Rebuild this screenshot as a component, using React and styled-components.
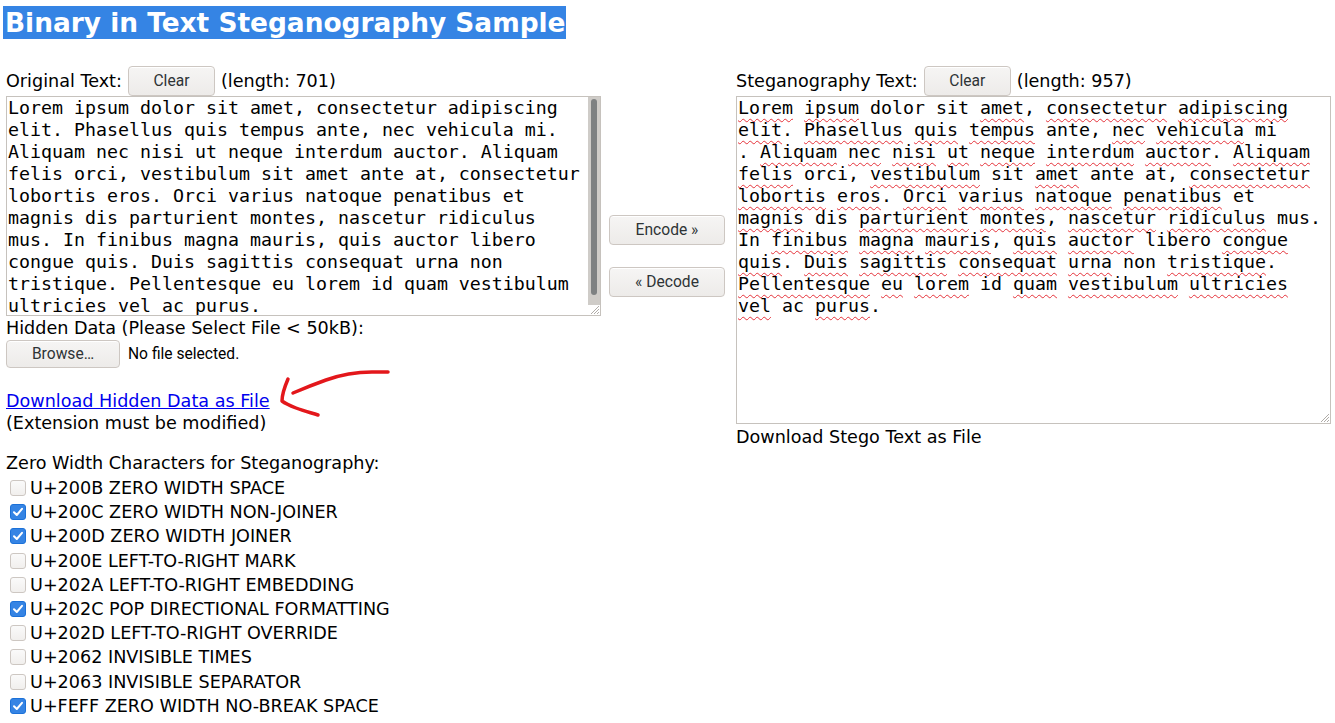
import React from 'react';
import styled, { createGlobalStyle } from 'styled-components';

const GlobalStyle = createGlobalStyle`
  body {
    margin: 0;
    background: #ffffff;
    color: #000000;
    font-family: 'DejaVu Sans', 'Noto Sans', sans-serif;
    font-size: 17.6px;
  }
`;

const Page = styled('div')`
  padding: 6px 0 0 0;
  width: 1335px;
  height: 723px;
  overflow: hidden;
  box-sizing: border-box;
`;

const Heading = styled('h2')`
  margin: 0 0 0 3px;
  font-size: 26.4px;
  font-weight: bold;
  line-height: 33px;
  height: 33px;
`;

const Selected = styled('span')`
  display: inline-block;
  background: #3584e4;
  color: #ffffff;
  padding: 0 1px 0 2px;
`;

const Columns = styled('div')`
  display: flex;
  align-items: flex-start;
  margin-top: 26px;
  padding-left: 6px;
`;

const Column = styled('div')`
  display: flex;
  flex-direction: column;
  width: ${(p) => p.$width}px;
`;

const Middle = styled('div')`
  display: flex;
  flex-direction: column;
  gap: 22px;
  width: 116px;
  margin: 0 11px 0 8px;
  padding-top: 150px;
`;

const LabelRow = styled('div')`
  display: flex;
  align-items: center;
  height: 31px;
  white-space: nowrap;
`;

const Button = styled('button')`
  font-family: Roboto, 'Noto Sans', sans-serif;
  font-size: 15.6px;
  color: #2e3436;
  height: ${(p) => p.$height || 30}px;
  width: ${(p) => p.$width}px;
  margin: ${(p) => p.$margin || '0'};
  padding: 0;
  border: 1px solid #cdc7c2;
  border-radius: 4px;
  background: linear-gradient(#f6f5f4, #edebe9);
  box-shadow: inset 0 1px 0 #ffffff;
  cursor: pointer;
`;

const TextBox = styled('div')`
  position: relative;
  display: flex;
  height: ${(p) => p.$height}px;
  box-sizing: border-box;
  border: 1px solid #c6c2bd;
  background: #ffffff;
  overflow: hidden;
`;

const MonoText = styled('div')`
  flex: 1;
  padding: 0 2px 0 1px;
  font-family: 'DejaVu Sans Mono', 'Liberation Mono', monospace;
  font-size: 18.27px;
  line-height: 22px;
  white-space: pre-wrap;
  color: #000000;
`;

const ScrollTrack = styled('div')`
  display: flex;
  justify-content: center;
  width: 12px;
  height: 208px;
  padding-top: 2px;
  box-sizing: border-box;
  background: #cfccc8;
`;

const ScrollThumb = styled('div')`
  width: 6px;
  height: 196px;
  border-radius: 3px;
  background: #7e8182;
`;

const Grip = styled('svg')`
  position: absolute;
  right: 0;
  bottom: 0;
`;

const Line = styled('div')`
  min-height: 22px;
`;

const Misspelt = styled('span')`
  text-decoration: underline wavy #e5323a;
  text-decoration-thickness: 1px;
  text-underline-offset: 4px;
`;

const TextLine = styled('div')`
  height: ${(p) => p.$height || 22}px;
  line-height: ${(p) => p.$height || 22}px;
  margin-top: ${(p) => p.$top || 0}px;
  white-space: nowrap;
`;

const FileRow = styled('div')`
  display: flex;
  align-items: center;
  gap: 8px;
  margin-top: 1px;
  height: 28px;
  font-family: Roboto, 'Noto Sans', sans-serif;
  font-size: 15.6px;
`;

const LinkLine = styled('div')`
  position: relative;
  height: 22px;
  line-height: 22px;
  margin-top: 22px;
`;

const Link = styled('a')`
  color: #0000ee;
  text-decoration: underline;
`;

const Arrow = styled('svg')`
  position: absolute;
  left: 270px;
  top: -24px;
`;

const CheckList = styled('div')`
  display: flex;
  flex-direction: column;
  margin-top: 2px;
`;

const CheckRow = styled('label')`
  display: flex;
  align-items: center;
  gap: 4px;
  height: 24.2px;
  padding-left: 4px;
  white-space: nowrap;
`;

const Box = styled('span')`
  display: flex;
  align-items: center;
  justify-content: center;
  width: 16px;
  height: 16px;
  box-sizing: border-box;
  border-radius: 3px;
  border: 1px solid ${(p) => (p.$checked ? '#1c71d8' : '#cdc7c2')};
  background: ${(p) => (p.$checked ? '#3584e4' : 'linear-gradient(#fafafa, #f1efed)')};
`;

const original =
  'Lorem ipsum dolor sit amet, consectetur adipiscing elit. Phasellus quis tempus ante, nec vehicula mi. Aliquam nec nisi ut neque interdum auctor. Aliquam felis orci, vestibulum sit amet ante at, consectetur lobortis eros. Orci varius natoque penatibus et magnis dis parturient montes, nascetur ridiculus mus. In finibus magna mauris, quis auctor libero congue quis. Duis sagittis consequat urna non tristique. Pellentesque eu lorem id quam vestibulum ultricies vel ac purus.';

const stegoLines = [
  'Lorem ipsum dolor sit amet, consectetur adipiscing',
  'elit. Phasellus quis tempus ante, nec vehicula mi',
  '. Aliquam nec nisi ut neque interdum auctor. Aliquam',
  'felis orci, vestibulum sit amet ante at, consectetur',
  'lobortis eros. Orci varius natoque penatibus et',
  'magnis dis parturient montes, nascetur ridiculus mus.',
  'In finibus magna mauris, quis auctor libero congue',
  'quis. Duis sagittis consequat urna non tristique.',
  'Pellentesque eu lorem id quam vestibulum ultricies',
  'vel ac purus.',
];

// words the spell checker knows
const known = ['dolor', 'sit', 'ante', 'mi', 'orci', 'at', 'et', 'dis', 'mus', 'In', 'libero', 'non', 'id', 'ac'];

const chars = [
  ['U+200B ZERO WIDTH SPACE', false],
  ['U+200C ZERO WIDTH NON-JOINER', true],
  ['U+200D ZERO WIDTH JOINER', true],
  ['U+200E LEFT-TO-RIGHT MARK', false],
  ['U+202A LEFT-TO-RIGHT EMBEDDING', false],
  ['U+202C POP DIRECTIONAL FORMATTING', true],
  ['U+202D LEFT-TO-RIGHT OVERRIDE', false],
  ['U+2062 INVISIBLE TIMES', false],
  ['U+2063 INVISIBLE SEPARATOR', false],
  ['U+FEFF ZERO WIDTH NO-BREAK SPACE', true],
];

const renderLine = (line) =>
  line.split(' ').map((token, i) => {
    const m = token.match(/^([^A-Za-z]*)([A-Za-z]*)(.*)$/);
    const word = m[2];
    return (
      <React.Fragment key={i}>
        {i > 0 && ' '}
        {m[1]}
        {word && !known.includes(word) ? <Misspelt>{word}</Misspelt> : word}
        {m[3]}
      </React.Fragment>
    );
  });

const ResizeGrip = () => (
  <Grip width="12" height="12" viewBox="0 0 12 12">
    <path d="M11 3 L3 11 M11 6 L6 11 M11 9 L9 11" stroke="#b0aca8" strokeWidth="1" />
  </Grip>
);

const Check = () => (
  <svg width="12" height="12" viewBox="0 0 12 12">
    <path d="M2 6.2 L4.8 9 L10 2.8" fill="none" stroke="#ffffff" strokeWidth="2" strokeLinecap="round" strokeLinejoin="round" />
  </svg>
);

const App = () => {
  return (
    <>
      <GlobalStyle />
      <Page>
        <Heading>
          <Selected>Binary in Text Steganography Sample</Selected>
        </Heading>
        <Columns>
          <Column $width={595}>
            <LabelRow>
              Original Text:
              <Button $width={87} $margin="0 6px 0 6px">Clear</Button>
              (length: 701)
            </LabelRow>
            <TextBox $height={220}>
              <MonoText>{original}</MonoText>
              <ScrollTrack>
                <ScrollThumb />
              </ScrollTrack>
              <ResizeGrip />
            </TextBox>
            <TextLine $top={1}>Hidden Data (Please Select File &lt; 50kB):</TextLine>
            <FileRow>
              <Button $width={114} $height={28}>Browse…</Button>
              No file selected.
            </FileRow>
            <LinkLine>
              <Link href="#">Download Hidden Data as File</Link>
              <Arrow width="116" height="54" viewBox="0 0 116 54">
                <path
                  d="M112 6 L96 6 C80 6 64 9 50 14 C36 19 24 24 17 27"
                  fill="none"
                  stroke="#e3171b"
                  strokeWidth="3.5"
                  strokeLinecap="round"
                />
                <path
                  d="M12 13 C9 20 6 28 6 35 C10 38 15 40 20 42 C28 45 36 47 42 49"
                  fill="none"
                  stroke="#e3171b"
                  strokeWidth="3.5"
                  strokeLinecap="round"
                  strokeLinejoin="round"
                />
              </Arrow>
            </LinkLine>
            <TextLine>(Extension must be modified)</TextLine>
            <TextLine $top={18}>Zero Width Characters for Steganography:</TextLine>
            <CheckList>
              {chars.map(([label, checked]) => (
                <CheckRow key={label}>
                  <Box $checked={checked}>{checked && <Check />}</Box>
                  {label}
                </CheckRow>
              ))}
            </CheckList>
          </Column>
          <Middle>
            <Button $width={116}>Encode »</Button>
            <Button $width={116}>« Decode</Button>
          </Middle>
          <Column $width={595}>
            <LabelRow>
              Steganography Text:
              <Button $width={87} $margin="0 6px 0 6px">Clear</Button>
              (length: 957)
            </LabelRow>
            <TextBox $height={328}>
              <MonoText>
                {stegoLines.map((line, i) => (
                  <Line key={i}>{renderLine(line)}</Line>
                ))}
              </MonoText>
              <ResizeGrip />
            </TextBox>
            <TextLine $top={2}>Download Stego Text as File</TextLine>
          </Column>
        </Columns>
      </Page>
    </>
  );
};

export default App;
